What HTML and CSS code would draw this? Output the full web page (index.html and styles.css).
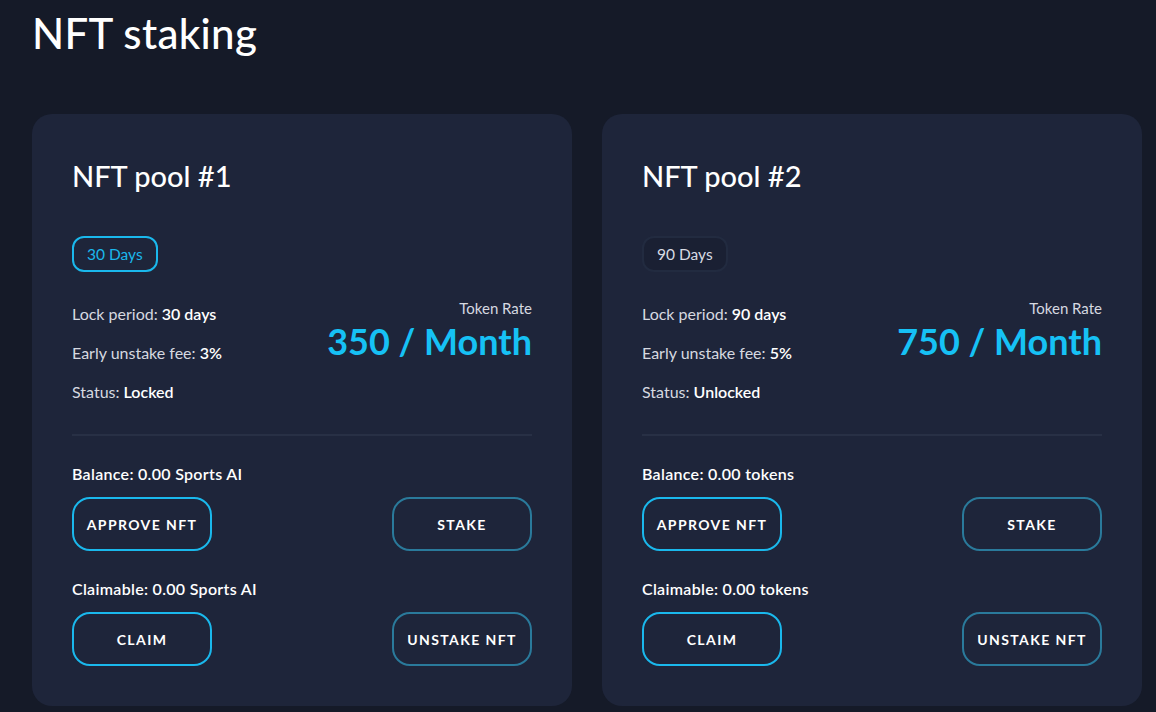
FILE: index.html
```html
<!DOCTYPE html>
<html>
<head>
<meta charset="utf-8">
<link rel="stylesheet" href="styles.css">
</head>
<body>
<main class="page">
  <h1 class="page-title">NFT staking</h1>
  <div class="pools">
    <section class="pool">
      <h2 class="pool-title">NFT pool #1</h2>
      <div class="badges"><span class="badge badge-active">30 Days</span></div>
      <div class="info">
        <div class="stats">
          <div class="stat">Lock period: <b>30 days</b></div>
          <div class="stat">Early unstake fee: <b>3%</b></div>
          <div class="stat">Status: <b>Locked</b></div>
        </div>
        <div class="rate">
          <div class="rate-label">Token Rate</div>
          <div class="rate-value">350 / Month</div>
        </div>
      </div>
      <hr class="divider">
      <div class="amount">Balance: 0.00 Sports AI</div>
      <div class="actions">
        <button class="btn btn-primary">APPROVE NFT</button>
        <button class="btn btn-muted">STAKE</button>
      </div>
      <div class="amount amount-second">Claimable: 0.00 Sports AI</div>
      <div class="actions">
        <button class="btn btn-primary">CLAIM</button>
        <button class="btn btn-muted">UNSTAKE NFT</button>
      </div>
    </section>
    <section class="pool">
      <h2 class="pool-title">NFT pool #2</h2>
      <div class="badges"><span class="badge">90 Days</span></div>
      <div class="info">
        <div class="stats">
          <div class="stat">Lock period: <b>90 days</b></div>
          <div class="stat">Early unstake fee: <b>5%</b></div>
          <div class="stat">Status: <b>Unlocked</b></div>
        </div>
        <div class="rate">
          <div class="rate-label">Token Rate</div>
          <div class="rate-value">750 / Month</div>
        </div>
      </div>
      <hr class="divider">
      <div class="amount">Balance: 0.00 tokens</div>
      <div class="actions">
        <button class="btn btn-primary">APPROVE NFT</button>
        <button class="btn btn-muted">STAKE</button>
      </div>
      <div class="amount amount-second">Claimable: 0.00 tokens</div>
      <div class="actions">
        <button class="btn btn-primary">CLAIM</button>
        <button class="btn btn-muted">UNSTAKE NFT</button>
      </div>
    </section>
  </div>
</main>
</body>
</html>
```
FILE: styles.css
```css
* { box-sizing: border-box; }
html, body {
  margin: 0;
  background: #151a28;
  font-family: "Lato", "Noto Sans", sans-serif;
  color: #ffffff;
}
.page {
  padding: 0 14px 0 32px;
}
.page-title {
  margin: 0;
  padding-top: 8px;
  font-size: 42px;
  line-height: 50px;
  font-weight: 500;
  letter-spacing: 0.3px;
}
.pools {
  margin-top: 56px;
  display: grid;
  grid-template-columns: 540px 540px;
  gap: 30px;
}
.pool {
  background: #1e253a;
  border-radius: 20px;
  padding: 40px 40px 40px;
}
.pool-title {
  margin: 0;
  font-size: 29px;
  line-height: 44px;
  font-weight: 500;
}
.badges {
  margin-top: 38px;
  display: flex;
}
.badge {
  display: inline-flex;
  align-items: center;
  height: 36px;
  padding: 0 13px;
  border-radius: 12px;
  border: 2px solid #222b40;
  background: #1a2033;
  font-size: 15.5px;
  color: #d8dbe3;
}
.badge-active {
  border-color: #1ab8ec;
  background: transparent;
  color: #1ab8ec;
}
.info {
  margin-top: 30px;
  display: flex;
  justify-content: space-between;
}
.stats {
  display: flex;
  flex-direction: column;
  gap: 15px;
}
.stat {
  font-size: 16px;
  line-height: 24px;
  color: #d6d9e0;
}
.stat b {
  color: #ffffff;
  font-weight: 600;
}
.rate {
  text-align: right;
  margin-top: -3px;
}
.rate-label {
  font-size: 15px;
  line-height: 18px;
  color: #d6d9e0;
}
.rate-value {
  margin-top: 2px;
  font-size: 36px;
  line-height: 44px;
  font-weight: 700;
  color: #16c1f5;
}
.divider {
  margin: 30px 0 0;
  border: 0;
  height: 2px;
  background: #283045;
}
.amount {
  margin-top: 26px;
  font-size: 16px;
  line-height: 24px;
  font-weight: 600;
  letter-spacing: 0.3px;
}
.amount-second {
  margin-top: 26px;
}
.actions {
  margin-top: 11px;
  display: flex;
  justify-content: space-between;
}
.btn {
  width: 140px;
  height: 54px;
  border-radius: 18px;
  background: transparent;
  color: #ffffff;
  font-family: inherit;
  font-size: 14px;
  font-weight: 700;
  letter-spacing: 1.4px;
  cursor: pointer;
}
.btn-primary {
  border: 2px solid #1ab8ec;
}
.btn-muted {
  border: 2px solid #2a7a9b;
}
```
